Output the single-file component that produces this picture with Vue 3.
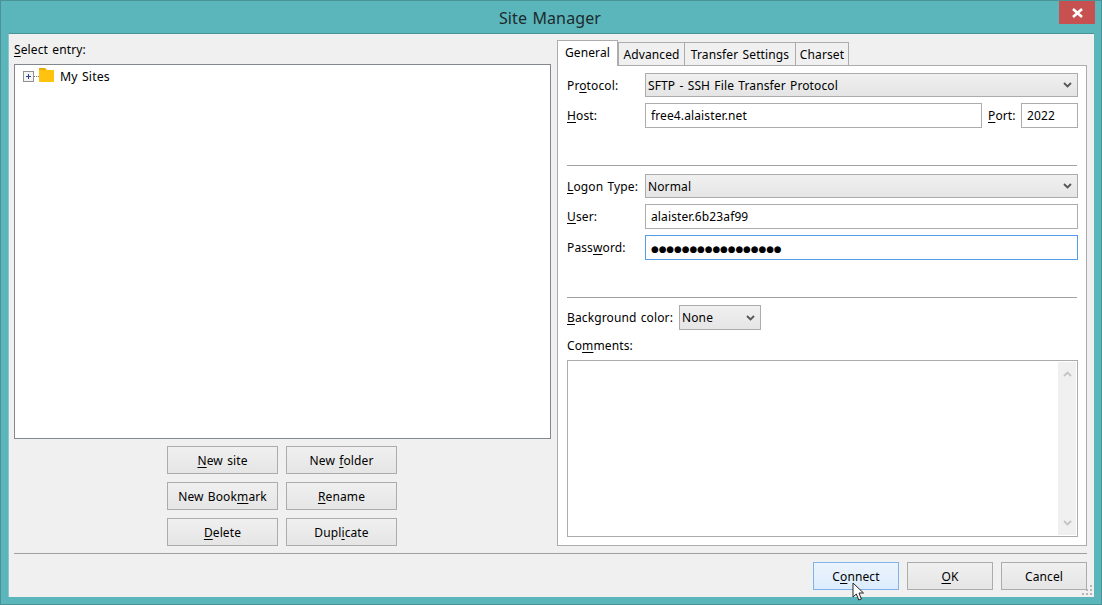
<template>
  <div class="window">
    <div class="titlebar">
      <span class="title">Site Manager</span>
      <button class="close-btn" aria-label="Close">
        <svg width="13" height="10" viewBox="0 0 13 10">
          <path d="M2 1 L11 9 M11 1 L2 9" stroke="#fff" stroke-width="2.6" fill="none" />
        </svg>
      </button>
    </div>

    <div class="client">
      <div class="panes">
        <div class="left-pane">
          <label class="entry-label"><u>S</u>elect entry:</label>
          <div class="tree">
            <div class="tree-row">
              <span class="expander">
                <svg width="9" height="9" viewBox="0 0 9 9">
                  <path d="M2 4.5 H7 M4.5 2 V7" stroke="#2b3f8c" stroke-width="1" fill="none" />
                </svg>
              </span>
              <span class="dots"></span>
              <svg class="folder" width="15" height="14" viewBox="0 0 15 14">
                <path d="M0 0 H6 L8 2 H15 V14 H0 Z" fill="#ffc20e" />
                <path d="M0 0 H6 L7.5 2 H0 Z" fill="#e8ac06" />
              </svg>
              <span class="tree-text">My Sites</span>
            </div>
          </div>
          <div class="site-buttons">
            <button v-for="b in siteButtons" :key="b.after" class="btn">{{ b.before }}<u>{{ b.key }}</u>{{ b.after }}</button>
          </div>
        </div>

        <div class="right-pane">
          <div class="tabs">
            <div v-for="(t, i) in tabs" :key="t" :class="['tab', { active: i === 0 }]">{{ t }}</div>
          </div>
          <div class="tab-body">
            <div class="row first">
              <label class="lbl">Pr<u>o</u>tocol:</label>
              <div class="select grow">
                <span>SFTP - SSH File Transfer Protocol</span>
                <svg class="chev" width="9" height="6" viewBox="0 0 9 6"><path d="M1 1 L4.5 4.5 L8 1" stroke="#555" stroke-width="1.8" fill="none" /></svg>
              </div>
            </div>
            <div class="row">
              <label class="lbl"><u>H</u>ost:</label>
              <div class="input grow">free4.alaister.net</div>
              <label class="port-lbl"><u>P</u>ort:</label>
              <div class="input port">2022</div>
            </div>
            <hr class="sep sep-a" />
            <div class="row">
              <label class="lbl"><u>L</u>ogon Type:</label>
              <div class="select grow">
                <span>Normal</span>
                <svg class="chev" width="9" height="6" viewBox="0 0 9 6"><path d="M1 1 L4.5 4.5 L8 1" stroke="#555" stroke-width="1.8" fill="none" /></svg>
              </div>
            </div>
            <div class="row">
              <label class="lbl"><u>U</u>ser:</label>
              <div class="input grow">alaister.6b23af99</div>
            </div>
            <div class="row">
              <label class="lbl">Pass<u>w</u>ord:</label>
              <div class="input grow focused"><span class="pw">●●●●●●●●●●●●●●●●●</span></div>
            </div>
            <hr class="sep sep-b" />
            <div class="row">
              <label class="bg-lbl"><u>B</u>ackground color:</label>
              <div class="select bg-select">
                <span>None</span>
                <svg class="chev" width="9" height="6" viewBox="0 0 9 6"><path d="M1 1 L4.5 4.5 L8 1" stroke="#555" stroke-width="1.8" fill="none" /></svg>
              </div>
            </div>
            <label class="comments-lbl">Co<u>m</u>ments:</label>
            <div class="textarea">
              <div class="scrollbar">
                <svg width="9" height="6" viewBox="0 0 9 6"><path d="M1 5 L4.5 1.5 L8 5" stroke="#c4c4c4" stroke-width="1.8" fill="none" /></svg>
                <svg width="9" height="6" viewBox="0 0 9 6"><path d="M1 1 L4.5 4.5 L8 1" stroke="#c4c4c4" stroke-width="1.8" fill="none" /></svg>
              </div>
            </div>
          </div>
        </div>
      </div>

      <hr class="bottom-sep" />

      <div class="footer">
        <button class="btn foot hover">C<u>o</u>nnect</button>
        <button class="btn foot"><u>O</u>K</button>
        <button class="btn foot">Cancel</button>
      </div>

      <svg class="grip" width="11" height="11" viewBox="0 0 11 11">
        <path d="M8 0h2v2H8zM4 4h2v2H4zM8 4h2v2H8zM0 8h2v2H0zM4 8h2v2H4zM8 8h2v2H8z" fill="#b5b5b5" />
      </svg>
    </div>

    <svg class="cursor" width="14" height="20" viewBox="0 0 14 20">
      <path d="M1 1 V15 L4.3 12 L6.8 18 L9.4 17 L7 11 H11.5 Z" fill="#fff" stroke="#222" stroke-width="1" />
    </svg>
  </div>
</template>

<script setup>
const siteButtons = [
  { before: '', key: 'N', after: 'ew site' },
  { before: 'New ', key: 'f', after: 'older' },
  { before: 'New Book', key: 'm', after: 'ark' },
  { before: '', key: 'R', after: 'ename' },
  { before: '', key: 'D', after: 'elete' },
  { before: 'Dupl', key: 'i', after: 'cate' }
]

const tabs = ['General', 'Advanced', 'Transfer Settings', 'Charset']
</script>

<style>
html, body {
  margin: 0;
  padding: 0;
  background: #5bb5bb;
}
</style>

<style scoped>
.window {
  position: relative;
  width: 1102px;
  height: 605px;
  box-sizing: border-box;
  background: #5bb6bc;
  border: 1px solid #4b9297;
  padding: 0 7px 7px;
  display: flex;
  flex-direction: column;
  overflow: hidden;
  font-family: "Noto Sans", "Open Sans", sans-serif;
  font-size: 12px;
  letter-spacing: 0.12px;
  word-spacing: 1px;
  color: #000;
}

.titlebar {
  position: relative;
  height: 32px;
  flex: none;
  display: flex;
  align-items: center;
  justify-content: center;
}

.title {
  font-size: 16px;
  color: #1c2a2b;
  margin-top: 2px;
  margin-left: -2px;
}

.close-btn {
  position: absolute;
  top: 0;
  right: -1px;
  width: 36px;
  height: 23px;
  border: none;
  padding: 0;
  background: #c75050;
  display: flex;
  align-items: center;
  justify-content: center;
}

.client {
  position: relative;
  flex: 1;
  background: #f0f0f0;
  border-top: 1px solid #4b9297;
  border-left: 1px solid #8fc4c8;
  padding: 0 7px 0 5px;
  display: flex;
  flex-direction: column;
  min-height: 0;
}

.panes {
  display: flex;
  gap: 6px;
  height: 512px;
  flex: none;
}

.left-pane {
  width: 537px;
  flex: none;
  display: flex;
  flex-direction: column;
}

.entry-label {
  height: 30px;
  line-height: 32px;
}

.tree {
  height: 375px;
  flex: none;
  box-sizing: border-box;
  background: #fff;
  border: 1px solid #828790;
}

.tree-row {
  display: flex;
  align-items: center;
  padding: 3px 0 0 8px;
  height: 16px;
}

.expander {
  width: 9px;
  height: 9px;
  border: 1px solid #919191;
  background: #f4f4f4;
  box-sizing: content-box;
  display: block;
  line-height: 0;
}

.dots {
  width: 5px;
  border-top: 1px dotted #777;
}

.folder {
  margin-top: -2px;
}

.tree-text {
  margin-left: 6px;
  font-size: 12.3px;
}

.site-buttons {
  display: grid;
  grid-template-columns: 111px 111px;
  grid-auto-rows: 28px;
  column-gap: 8px;
  row-gap: 8px;
  justify-content: center;
  margin-top: 7px;
  padding-right: 1px;
}

.btn {
  box-sizing: border-box;
  border: 1px solid #acacac;
  background: linear-gradient(#f0f0f0, #e5e5e5);
  font: inherit;
  letter-spacing: inherit;
  word-spacing: inherit;
  color: #000;
  padding: 0;
  white-space: nowrap;
}

.right-pane {
  flex: 1;
  display: flex;
  flex-direction: column;
  min-width: 0;
}

.tabs {
  display: flex;
  align-items: flex-end;
  height: 31px;
  flex: none;
  padding-top: 6px;
  box-sizing: border-box;
  position: relative;
  z-index: 1;
}

.tab {
  box-sizing: border-box;
  height: 23px;
  line-height: 23px;
  text-align: center;
  background: #f0f0f0;
  border: 1px solid #acacac;
  border-bottom: none;
  margin-left: -1px;
  margin-bottom: 0;
}

.tab:nth-child(1) { width: 61px; margin-left: 0; }
.tab:nth-child(2) { width: 67px; margin-left: 0; }
.tab:nth-child(3) { width: 112px; }
.tab:nth-child(4) { width: 54px; }

.tab.active {
  height: 26px;
  line-height: 24px;
  background: #fff;
  margin-bottom: -1px;
  position: relative;
  z-index: 2;
}

.tab-body {
  flex: 1;
  box-sizing: border-box;
  background: #fff;
  border: 1px solid #acacac;
  padding: 7px 8px 8px 9px;
  display: flex;
  flex-direction: column;
  min-height: 0;
}

.row {
  display: flex;
  align-items: center;
  margin-top: 6px;
}

.row.first {
  margin-top: 0;
}

.lbl {
  width: 78px;
  flex: none;
}

.grow {
  flex: 1;
  min-width: 0;
}

.input {
  box-sizing: border-box;
  height: 25px;
  line-height: 23px;
  border: 1px solid #acacac;
  background: #fff;
  padding-left: 5px;
}

.input.focused {
  border-color: #569de5;
}

.pw {
  font-family: "DejaVu Sans", sans-serif;
  font-size: 8.8px;
  letter-spacing: 0;
}

.select {
  box-sizing: border-box;
  height: 24px;
  border: 1px solid #acacac;
  background: linear-gradient(#f0f0f0, #e5e5e5);
  padding: 0 5px 0 2px;
  display: flex;
  align-items: center;
  justify-content: space-between;
}

.port-lbl {
  margin: 0 6px;
  width: 27px;
  flex: none;
}

.port {
  width: 57px;
  flex: none;
}

.sep {
  border: none;
  border-top: 1px solid #a0a0a0;
  margin: 0;
  width: 510px;
  height: 0;
}

.sep-a {
  margin-top: 37px;
  margin-bottom: 2px;
}

.sep-b {
  margin-top: 37px;
  margin-bottom: 1px;
}

.bg-lbl {
  width: 112px;
  flex: none;
}

.bg-select {
  width: 82px;
  height: 25px;
  flex: none;
}

.comments-lbl {
  margin-top: 7px;
  height: 23px;
  line-height: 17px;
}

.textarea {
  flex: 1;
  box-sizing: border-box;
  border: 1px solid #acacac;
  background: #fff;
  display: flex;
  justify-content: flex-end;
  padding: 1px;
  min-height: 0;
}

.scrollbar {
  width: 18px;
  background: #f0f0f0;
  display: flex;
  flex-direction: column;
  align-items: center;
  justify-content: space-between;
  padding: 9px 0;
  box-sizing: border-box;
}

.bottom-sep {
  border: none;
  border-top: 1px solid #a0a0a0;
  margin: 7px 0 0;
  height: 0;
  width: 1073px;
}

.footer {
  display: flex;
  justify-content: flex-end;
  gap: 8px;
  margin-top: 8px;
}

.foot {
  width: 86px;
  height: 28px;
}

.foot.hover {
  background: linear-gradient(#ecf4fc, #dcecfc);
  border-color: #7eb4ea;
}

.grip {
  position: absolute;
  right: 1px;
  bottom: 1px;
}

.cursor {
  position: absolute;
  left: 851px;
  top: 581px;
}

u {
  text-decoration-thickness: 1px;
  text-underline-offset: 2px;
}
</style>
